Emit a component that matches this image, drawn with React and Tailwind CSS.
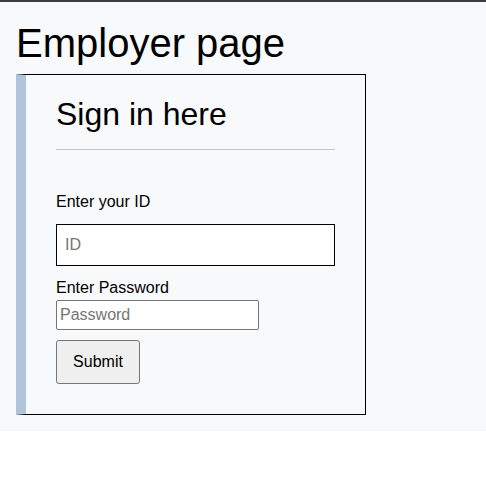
const App = () => {
  return (
    <div className="font-['Liberation_Sans',Arial,sans-serif] text-black">
      <div className="h-[2px] bg-[#3c3c3c]" />
      <div className="bg-[#f8f9fa] pl-4 pt-[18px] pb-[16px]">
        <h1 className="m-0 text-[40px] leading-[46px] font-normal">Employer page</h1>

        {/* Sign in card */}
        <div className="mt-2 w-[350px] border border-black border-l-[10px] border-l-[#b0c4de] pl-[30px] pr-[30px] pt-[21px] pb-[30px]">
          <h2 className="m-0 text-[32px] leading-[37px] font-normal">Sign in here</h2>
          <hr className="mt-4 border-0 border-t border-[#c4c4c4]" />

          <form onSubmit={(e) => e.preventDefault()} className="flex flex-col">
            <label className="mt-[43px] text-base leading-[18px]">Enter your ID</label>
            <input
              type="text"
              placeholder="ID"
              className="mt-[13px] h-[42px] w-full border border-black bg-white px-2 text-base placeholder:text-[#757575] outline-none"
            />
            <label className="mt-[13px] text-base leading-[18px]">Enter Password</label>
            <input
              type="password"
              placeholder="Password"
              className="mt-[3px] h-[30px] w-[203px] rounded-[2px] border border-[#767676] bg-white px-[3px] text-base placeholder:text-[#757575] outline-none"
            />
            <button
              type="submit"
              className="mt-[10px] h-[44px] w-[84px] rounded-[3px] border border-[#767676] bg-[#efefef] text-base"
            >
              Submit
            </button>
          </form>
        </div>
      </div>
    </div>
  );
};

export default App;
